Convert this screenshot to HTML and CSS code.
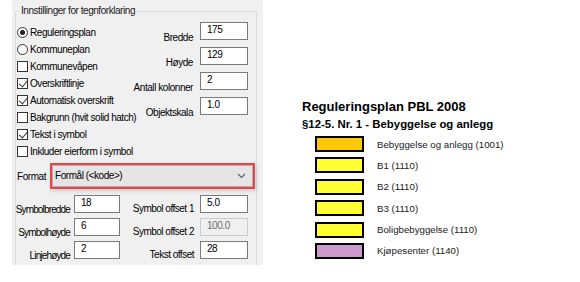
FILE: index.html
```html
<!DOCTYPE html>
<html lang="no">
<head>
    <meta charset="UTF-8">
    <title>Tegnforklaring</title>
    <link rel="stylesheet" href="styles.css">
</head>
<body>
    <div class="page">
        <div class="panel">
            <fieldset class="group">
                <legend>Innstillinger for tegnforklaring</legend>

                <div class="top">
                    <div class="options">
                        <div class="opt"><span class="radio on"></span>Reguleringsplan</div>
                        <div class="opt"><span class="radio"></span>Kommuneplan</div>
                        <div class="opt"><span class="check"></span>Kommunevåpen</div>
                        <div class="opt"><span class="check on"></span>Overskriftlinje</div>
                        <div class="opt"><span class="check on"></span>Automatisk overskrift</div>
                        <div class="opt"><span class="check"></span>Bakgrunn (hvit solid hatch)</div>
                        <div class="opt"><span class="check on"></span>Tekst i symbol</div>
                        <div class="opt"><span class="check"></span>Inkluder eierform i symbol</div>
                    </div>

                    <div class="fields">
                        <div class="field"><span class="lbl">Bredde</span><span class="input">175</span></div>
                        <div class="field"><span class="lbl">Høyde</span><span class="input">129</span></div>
                        <div class="field"><span class="lbl">Antall kolonner</span><span class="input">2</span></div>
                        <div class="field"><span class="lbl">Objektskala</span><span class="input">1.0</span></div>
                    </div>
                </div>

                <div class="format-row">
                    <span class="format-lbl">Format</span>
                    <div class="select">
                        <span>Formål (&lt;kode&gt;)</span>
                        <svg class="chevron" width="9" height="6" viewBox="0 0 9 6"><polyline points="1,1 4.5,4.5 8,1" fill="none" stroke="#606060" stroke-width="1.1"/></svg>
                    </div>
                </div>

                <div class="sizes">
                    <div class="size-row">
                        <span class="slbl"><span>Symbolbredde</span></span><span class="input small">18</span>
                        <span class="slbl right"><span>Symbol offset 1</span></span><span class="input">5.0</span>
                    </div>
                    <div class="size-row">
                        <span class="slbl"><span>Symbolhøyde</span></span><span class="input small">6</span>
                        <span class="slbl right"><span>Symbol offset 2</span></span><span class="input disabled">100.0</span>
                    </div>
                    <div class="size-row">
                        <span class="slbl"><span>Linjehøyde</span></span><span class="input small">2</span>
                        <span class="slbl right"><span>Tekst offset</span></span><span class="input">28</span>
                    </div>
                </div>
            </fieldset>
        </div>

        <div class="legend">
            <h2 class="legend-title">Reguleringsplan PBL 2008</h2>
            <h3 class="legend-sub">§12-5. Nr. 1 - Bebyggelse og anlegg</h3>
            <ul class="items">
                <li><span class="swatch orange"></span>Bebyggelse og anlegg (1001)</li>
                <li><span class="swatch yellow"></span>B1 (1110)</li>
                <li><span class="swatch yellow"></span>B2 (1110)</li>
                <li><span class="swatch yellow"></span>B3 (1110)</li>
                <li><span class="swatch yellow"></span>Boligbebyggelse (1110)</li>
                <li><span class="swatch purple"></span>Kjøpesenter (1140)</li>
            </ul>
        </div>
    </div>
</body>
</html>
```

FILE: styles.css
```css
* {
    margin: 0;
    padding: 0;
    box-sizing: border-box;
}

body {
    background: #fff;
    font-family: 'Liberation Sans', Arial, sans-serif;
}

.page {
    display: flex;
    align-items: flex-start;
}

/* settings dialog */
.panel {
    margin-left: 12px;
    width: 251px;
    height: 265px;
    background: #f0f0f0;
    padding: 5px 6px 0 3px;
    overflow: hidden;
    font-size: 10px;
    letter-spacing: -0.45px;
    color: #000;
}

.group {
    border: 1px solid #dcdcdc;
    border-bottom: none;
    min-width: 0;
    width: 242px;
    height: 300px;
    padding: 0 8px 0 1px;
}

.group legend {
    margin-left: 2px;
    padding: 0 2px;
    line-height: 12px;
    color: #1a1a1a;
}

.top {
    display: flex;
    padding-top: 5px;
}

.options {
    width: 118px;
    flex-shrink: 0;
    margin-top: 2px;
}

.opt {
    display: flex;
    align-items: center;
    height: 17px;
    gap: 2px;
    white-space: nowrap;
}

.radio,
.check {
    width: 11px;
    height: 11px;
    border: 1px solid #333;
    background: #fff;
    flex-shrink: 0;
    position: relative;
}

.radio {
    border-radius: 50%;
}

.radio.on::after {
    content: '';
    position: absolute;
    top: 2px;
    left: 2px;
    width: 5px;
    height: 5px;
    border-radius: 50%;
    background: #222;
}

.check.on::after {
    content: '';
    position: absolute;
    left: 3px;
    top: -1px;
    width: 4px;
    height: 8px;
    border: solid #333;
    border-width: 0 1px 1px 0;
    transform: rotate(40deg);
}

.fields {
    flex: 1;
    min-width: 0;
    display: flex;
    flex-direction: column;
    gap: 7px;
}

.field {
    display: flex;
    justify-content: flex-end;
    gap: 7px;
    height: 18px;
}

.field .lbl {
    padding-top: 10px;
    line-height: 12px;
    white-space: nowrap;
}

.input {
    width: 48px;
    height: 18px;
    flex-shrink: 0;
    background: #fff;
    border: 1px solid #7a7a7a;
    padding: 1px 0 0 6px;
    line-height: 12px;
}

.input.small {
    width: 46px;
}

.input.disabled {
    background: #f0f0f0;
    border-color: #cccccc;
    color: #6d6d6d;
}

/* format select */
.format-row {
    display: flex;
    align-items: center;
    margin-top: 5px;
    height: 21px;
}

.format-lbl {
    width: 35px;
    padding-top: 2px;
    flex-shrink: 0;
}

.select {
    flex: 1;
    height: 22px;
    margin-right: -5px;
    background: #e5e5e5;
    border: 1px solid #adadad;
    box-shadow: 0 0 0 2px #ea4448, 1px 2px 4px 2px rgba(0, 0, 0, 0.15);
    display: flex;
    align-items: center;
    justify-content: space-between;
    padding: 0 6px 0 2px;
}

.chevron {
    margin-top: 1px;
}

/* size inputs */
.sizes {
    margin-top: 9px;
    display: flex;
    flex-direction: column;
    gap: 5px;
}

.size-row {
    display: grid;
    grid-template-columns: 53px 46px 72px 48px;
    column-gap: 4px;
    align-items: end;
    height: 18px;
}

.size-row .slbl {
    display: flex;
    justify-content: flex-end;
    line-height: 12px;
    margin-bottom: -3px;
    white-space: nowrap;
    letter-spacing: -0.85px;
}

.size-row .slbl.right {
    margin-right: 2px;
    margin-bottom: -2px;
    letter-spacing: -0.5px;
}

/* legend preview */
.legend {
    margin-left: 39px;
    padding-top: 99px;
    color: #000;
}

.legend-title {
    font-size: 13px;
    font-weight: bold;
    line-height: 16px;
}

.legend-sub {
    font-size: 11.4px;
    font-weight: bold;
    line-height: 14px;
    margin-top: 2px;
}

.items {
    list-style: none;
    margin-top: 5px;
    padding-left: 13px;
    display: flex;
    flex-direction: column;
    gap: 5.4px;
}

.items li {
    display: flex;
    align-items: center;
    gap: 13px;
    height: 16px;
    font-size: 9.7px;
    color: #1a1a1a;
}

.swatch {
    width: 49px;
    height: 16px;
    border: 2px solid #000;
}

.orange { background: #ffc800; }
.yellow { background: #ffff33; }
.purple { background: #cc99cc; }
```
